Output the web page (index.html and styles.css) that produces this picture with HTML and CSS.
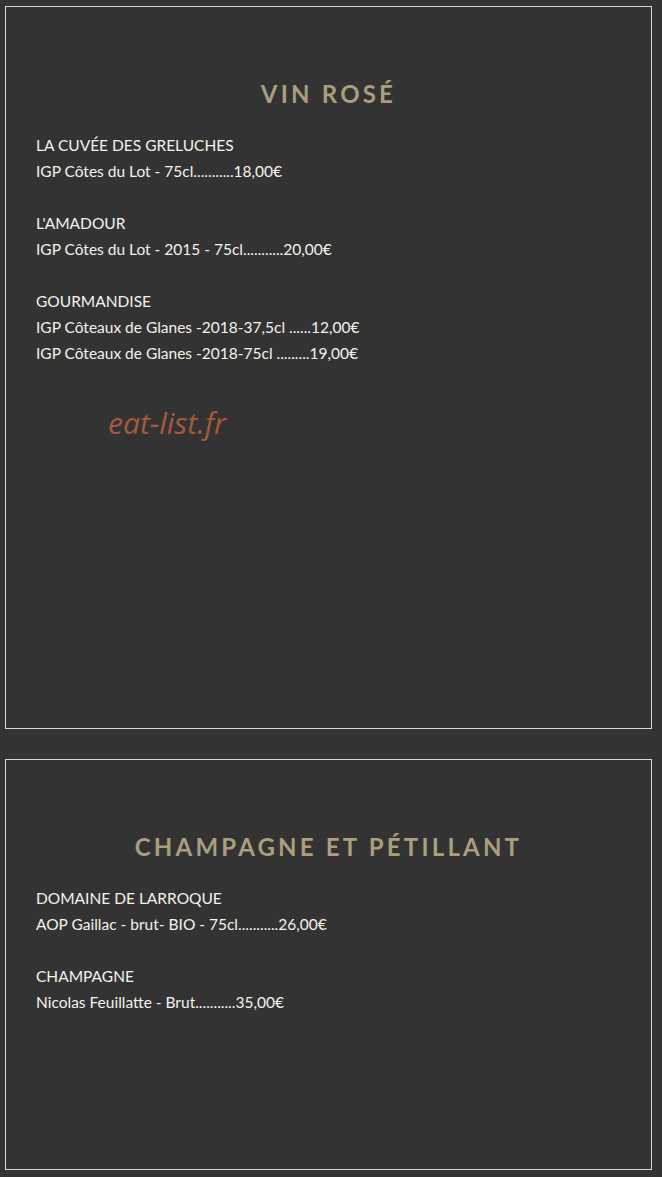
FILE: index.html
```html
<!DOCTYPE html>
<html lang="fr">
<head>
    <meta charset="UTF-8">
    <meta name="viewport" content="width=device-width, initial-scale=1.0">
    <title>Carte des vins</title>
    <link rel="stylesheet" href="styles.css">
</head>
<body>
    <!-- Vin rosé -->
    <div class="card card-rose">
        <h2>VIN ROSÉ</h2>
        <div class="wine">
            <p>LA CUVÉE DES GRELUCHES</p>
            <p>IGP Côtes du Lot - 75cl...........18,00€</p>
        </div>
        <div class="wine">
            <p>L'AMADOUR</p>
            <p>IGP Côtes du Lot - 2015 - 75cl...........20,00€</p>
        </div>
        <div class="wine">
            <p>GOURMANDISE</p>
            <p>IGP Côteaux de Glanes -2018-37,5cl ......12,00€</p>
            <p>IGP Côteaux de Glanes -2018-75cl .........19,00€</p>
        </div>
        <span class="watermark">eat-list.fr</span>
    </div>

    <!-- Champagne -->
    <div class="card card-champagne">
        <h2>CHAMPAGNE ET PÉTILLANT</h2>
        <div class="wine">
            <p>DOMAINE DE LARROQUE</p>
            <p>AOP Gaillac - brut- BIO - 75cl...........26,00€</p>
        </div>
        <div class="wine">
            <p>CHAMPAGNE</p>
            <p>Nicolas Feuillatte - Brut...........35,00€</p>
        </div>
    </div>
</body>
</html>
```

FILE: styles.css
```css
body {
    margin: 0;
    padding: 6px 0 0 5px;
    background-color: #333333;
    font-family: Lato, "Open Sans", sans-serif;
    color: #f4f2ec;
}
.card {
    position: relative;
    box-sizing: border-box;
    width: 647px;
    border: 1px solid #d6d6d6;
    padding: 72px 30px 0;
}
.card-rose {
    height: 723px;
}
.card-champagne {
    height: 411px;
    margin-top: 30px;
}
h2 {
    margin: 0 0 23px;
    text-align: center;
    font-size: 24px;
    line-height: 30px;
    font-weight: 700;
    letter-spacing: 3.2px;
    color: #a99f7d;
}
.wine {
    margin-bottom: 26px;
}
.wine p {
    margin: 0;
    font-size: 15.5px;
    line-height: 26px;
}
.watermark {
    position: absolute;
    left: 102px;
    top: 395px;
    font-family: "Open Sans", sans-serif;
    font-style: italic;
    font-size: 30px;
    color: #a4593a;
}
```
